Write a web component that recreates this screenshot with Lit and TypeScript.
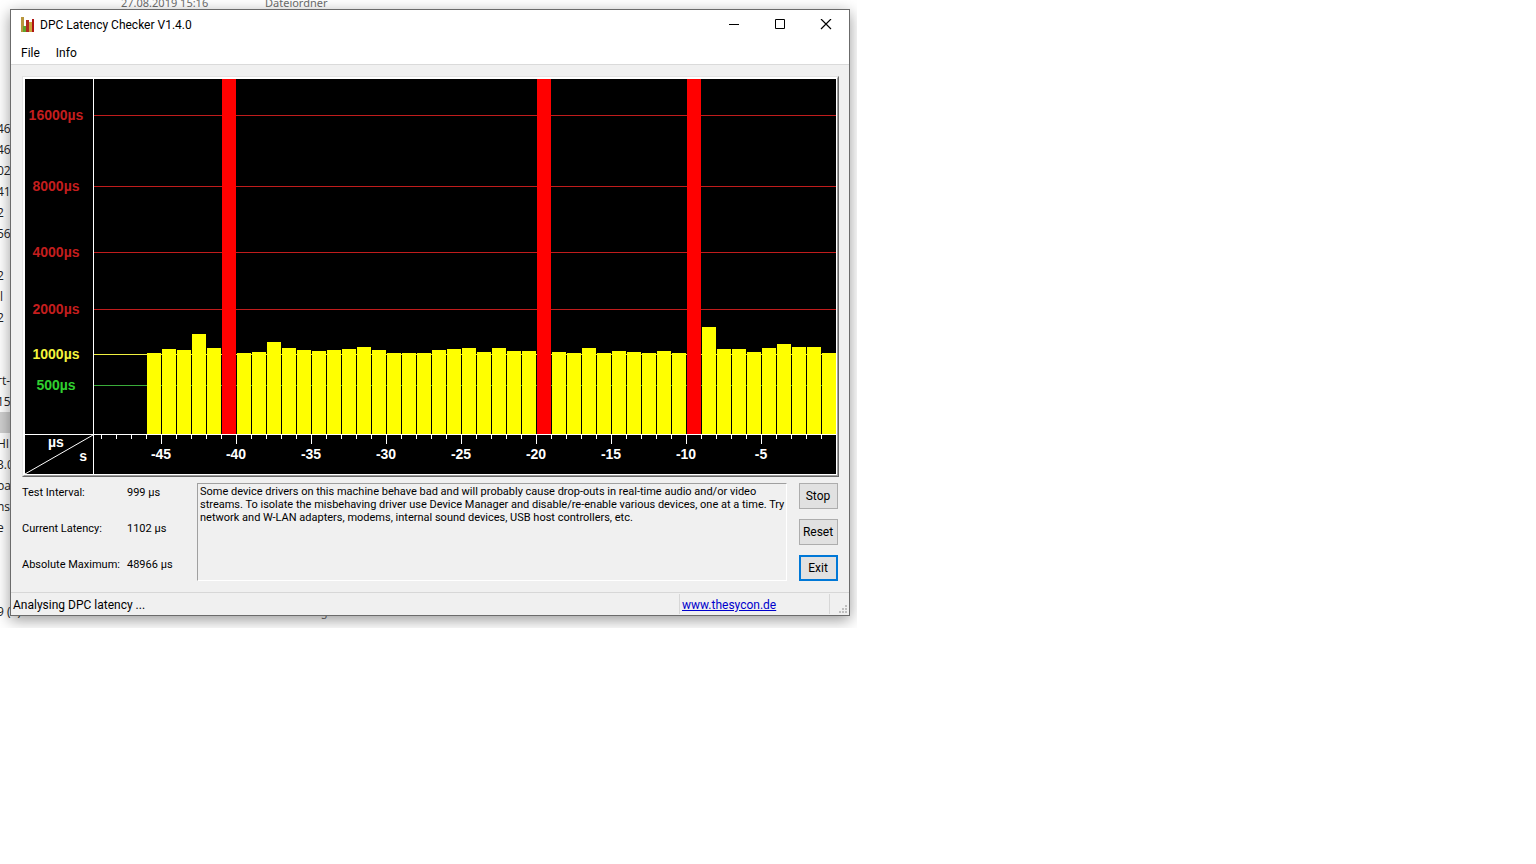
import { LitElement, html, css } from "lit";
import { customElement, property } from "lit/decorators.js";
import { classMap } from "lit/directives/class-map.js";
import { styleMap } from "lit/directives/style-map.js";

const PLOT_TOP = 79;
const PLOT_BASE = 434;
const FULL = PLOT_BASE - PLOT_TOP;

/* Bar heights in pixels above the time axis, oldest first. */
const BARS: number[] = [
  81, 85, 84, 100, 86, FULL, 81, 82, 92, 86, 84, 83, 84, 85, 87, 84, 81, 81, 81,
  84, 85, 86, 82, 86, 83, 83, FULL, 82, 81, 86, 81, 83, 82, 81, 83, 81, FULL,
  107, 85, 85, 82, 86, 90, 87, 87, 81,
];

const LEVELS = [
  { label: "16000µs", height: 319, tone: "high" },
  { label: "8000µs", height: 248, tone: "high" },
  { label: "4000µs", height: 182, tone: "high" },
  { label: "2000µs", height: 125, tone: "high" },
  { label: "1000µs", height: 80, tone: "mid" },
  { label: "500µs", height: 49, tone: "low" },
];

@customElement("latency-chart")
export class LatencyChart extends LitElement {
  @property({ attribute: false }) bars: number[] = BARS;

  static styles = css`
    :host {
      display: block;
      border: 1px solid #e3e3e3;
      border-right-color: #696969;
      border-bottom-color: #696969;
    }
    .bevel {
      border: 1px solid #fff;
      border-right-color: #a0a0a0;
      border-bottom-color: #a0a0a0;
    }
    .face {
      display: grid;
      grid-template-columns: 68px minmax(0, 1fr);
      grid-template-rows: 355px 40px;
      background: #000;
      border: 1px solid #fff;
      font: bold 14px/16px "Liberation Sans", Arial, sans-serif;
      color: #fff;
    }
    .scale {
      position: relative;
    }
    .level {
      position: absolute;
      left: 0;
      right: 6px;
      text-align: center;
      transform: translateY(50%);
    }
    .plot {
      position: relative;
      border-left: 1px solid #fff;
      overflow: hidden;
      display: flex;
      justify-content: flex-end;
      align-items: flex-end;
    }
    .line {
      position: absolute;
      left: 0;
      right: 0;
      height: 1px;
    }
    .level.high {
      color: #c41e1e;
    }
    .level.mid {
      color: #f4f43c;
    }
    .level.low {
      color: #30d030;
    }
    .line.high {
      background: #c01c1c;
    }
    .line.mid {
      background: #f0f040;
    }
    .line.low {
      background: #3aac3a;
    }
    .bar {
      position: relative;
      flex: none;
      width: 14px;
      margin-left: 1px;
      background: #ff0;
    }
    .bar.over {
      background: #f00;
    }
    .corner {
      position: relative;
      border-top: 1px solid #fff;
      display: grid;
      grid-template-rows: 14px 16px;
      padding: 0 6px 0 23px;
      line-height: 14px;
    }
    .corner svg {
      position: absolute;
      inset: 0;
      width: 100%;
      height: 100%;
    }
    .seconds {
      justify-self: end;
    }
    .axis {
      border-left: 1px solid #fff;
      border-top: 1px solid #fff;
      overflow: hidden;
      display: flex;
      justify-content: flex-end;
    }
    .slot {
      flex: none;
      width: 15px;
      display: flex;
      flex-direction: column;
      align-items: flex-start;
    }
    .tick {
      width: 1px;
      height: 4px;
      background: #fff;
    }
    .major .tick {
      height: 9px;
    }
    .time {
      width: 40px;
      margin-left: -20px;
      margin-top: 2px;
      text-align: center;
    }
  `;

  render() {
    const slots = Array.from({ length: 49 }, (_, i) => i - 49);
    return html`
      <div class="bevel">
        <div class="face">
          <div class="scale">
            ${LEVELS.map(
              (l) => html`<span class="level ${l.tone}" style=${styleMap({ bottom: `${l.height}px` })}>${l.label}</span>`
            )}
          </div>
          <div class="plot">
            ${LEVELS.map(
              (l) => html`<span class="line ${l.tone}" style=${styleMap({ bottom: `${l.height - 1}px` })}></span>`
            )}
            ${this.bars.map(
              (h) => html`<span
                class=${classMap({ bar: true, over: h >= FULL })}
                style=${styleMap({ height: `${h}px` })}
              ></span>`
            )}
          </div>
          <div class="corner">
            <svg viewBox="0 0 68 39" preserveAspectRatio="none" aria-hidden="true">
              <path d="M0 39 68 0" stroke="#fff" fill="none" />
            </svg>
            <span>µs</span>
            <span class="seconds">s</span>
          </div>
          <div class="axis">
            ${slots.map((s) => {
              const major = s % 5 === 0;
              return html`<div class=${classMap({ slot: true, major })}>
                <span class="tick"></span>
                ${major ? html`<span class="time">${s}</span>` : ""}
              </div>`;
            })}
          </div>
        </div>
      </div>
    `;
  }
}

interface FileRow {
  name?: string;
  date?: string;
  kind?: string;
  size?: string;
  selected?: boolean;
}

const FILES: FileRow[] = Array.from({ length: 30 }, () => ({}));
const NAMES: Record<number, string> = {
  6: "469", 7: "467", 8: "029", 9: "419", 10: "2", 11: "566", 13: "2", 14: "ll",
  15: "2", 18: "rt-", 19: "153", 21: "HI", 22: "3.0", 23: "bat", 24: "nst", 25: "e",
};
for (const [row, name] of Object.entries(NAMES)) FILES[Number(row)].name = name;
FILES[0] = { date: "27.08.2019 15:16", kind: "Dateiordner" };
FILES[20].selected = true;
FILES[29] = { name: "9 (1).exe", date: "03.02.2020 15:29", kind: "Anwendung", size: "46.604 KB" };

@customElement("file-list")
export class FileList extends LitElement {
  static styles = css`
    :host {
      display: block;
      overflow: hidden;
      background: #fff;
      font: 12px/21px "Open Sans", "Noto Sans", sans-serif;
      color: #222;
    }
    .rows {
      margin: -8px 0 0 -3px;
    }
    .row {
      display: grid;
      grid-template-columns: 124px 144px 137px 1fr;
      height: 21px;
      white-space: nowrap;
    }
    .selected .name {
      background: #d0d0d0;
    }
    .meta {
      color: #6d6d6d;
      font: 11px/21px "Noto Sans", sans-serif;
    }
  `;

  render() {
    return html`<div class="rows">
      ${FILES.map(
        (f) => html`<div class=${classMap({ row: true, selected: !!f.selected })}>
          <span class="name">${f.name ?? ""}</span>
          <span class="meta">${f.date ?? ""}</span>
          <span class="meta">${f.kind ?? ""}</span>
          <span class="meta">${f.size ?? ""}</span>
        </div>`
      )}
    </div>`;
  }
}

@customElement("app-root")
export class AppRoot extends LitElement {
  static styles = css`
    :host {
      display: block;
      min-height: 100vh;
      background: #fff;
      color: #000;
      font: 11px/13px "Roboto", "DejaVu Sans", sans-serif;
    }
    .desktop {
      position: relative;
      box-sizing: border-box;
      width: 857px;
      max-width: 100%;
      padding: 9px 7px 12px 10px;
      overflow: hidden;
    }
    file-list {
      position: absolute;
      inset: 0;
    }
    .window {
      position: relative;
      background: #f0f0f0;
      border: 1px solid #6b6b6b;
      box-shadow: 0 4px 14px rgba(0, 0, 0, 0.4);
    }
    .titlebar {
      display: flex;
      align-items: center;
      height: 30px;
      padding-left: 9px;
      background: #fff;
      font: 12px/16px "Roboto", "Noto Sans", sans-serif;
    }
    .titlebar h1 {
      flex: 1;
      margin: 0 0 0 5px;
      font: inherit;
    }
    .logo {
      width: 15px;
      height: 16px;
    }
    .caption {
      display: grid;
      place-items: center;
      width: 46px;
      height: 28px;
      padding: 0;
      border: 0;
      background: none;
    }
    .caption svg {
      width: 12px;
      height: 12px;
      stroke: #000;
      fill: none;
    }
    .menubar {
      display: flex;
      height: 22px;
      padding: 2px 2px 0;
      background: #fff;
      border-bottom: 1px solid #dadada;
    }
    .menubar button {
      padding: 0 8px;
      border: 0;
      background: none;
      color: #000;
      font: 12px/22px "Roboto", "Noto Sans", sans-serif;
    }
    latency-chart {
      margin: 11px 10px 0 11px;
    }
    .panel {
      display: grid;
      grid-template-columns: 175px minmax(0, 1fr) 39px;
      padding: 6px 11px 11px 11px;
    }
    .stats {
      display: grid;
      grid-template-columns: 105px 1fr;
      grid-template-rows: 36px 36px;
      align-content: start;
      margin: 0;
      padding-top: 3px;
    }
    .stats dt,
    .stats dd {
      margin: 0;
    }
    .message {
      box-sizing: border-box;
      height: 98px;
      margin: 0 12px 0 0;
      padding: 1px 0 1px 2px;
      border: 1px solid #a0a0a0;
      border-right-color: #fff;
      border-bottom-color: #fff;
    }
    .actions {
      display: grid;
      grid-auto-rows: 26px;
      gap: 10px;
      align-content: start;
      height: 98px;
    }
    .actions button {
      padding: 0 1px 0 0;
      border: 1px solid #adadad;
      border-radius: 0;
      background: #e1e1e1;
      color: #000;
      font: 12px/16px "Roboto", "DejaVu Sans", sans-serif;
    }
    .actions .default {
      border: 2px solid #0078d7;
    }
    .statusbar {
      display: grid;
      grid-template-columns: minmax(0, 1fr) 150px 19px;
      height: 22px;
      border-top: 1px solid #d7d7d7;
      font: 12px/22px "Roboto", "DejaVu Sans", sans-serif;
    }
    .statusbar > * {
      padding: 0 2px;
      height: 20px;
      margin-top: 1px;
      border-right: 1px solid #d7d7d7;
    }
    .statusbar .grip {
      display: flex;
      align-items: flex-end;
      justify-content: flex-end;
      border: 0;
      padding: 0 1px 0 0;
    }
    .grip svg {
      width: 9px;
      height: 9px;
      fill: #bfbfbf;
    }
    a {
      color: #00c;
    }
  `;

  render() {
    return html`
      <div class="desktop">
        <file-list aria-hidden="true"></file-list>
        <main class="window">
          <header class="titlebar">
            <svg class="logo" viewBox="0 0 15 16" aria-hidden="true">
              <path fill="#b8963c" d="M1 0h3v15H1z" />
              <path fill="#5fa32c" d="M3 9h4v6H3z" />
              <path fill="#b02a20" d="M6 3h3v12H6z" />
              <path fill="#c9a63c" d="M9 5h3v10H9z" />
              <path fill="#b01414" d="M12 2h2v13h-2z" />
            </svg>
            <h1>DPC Latency Checker V1.4.0</h1>
            <button class="caption" aria-label="Minimize">
              <svg viewBox="0 0 12 12"><path d="M1 5.5h10" /></svg>
            </button>
            <button class="caption" aria-label="Maximize">
              <svg viewBox="0 0 12 12"><path d="M1.5.5h9v9h-9z" /></svg>
            </button>
            <button class="caption" aria-label="Close">
              <svg viewBox="0 0 12 12"><path d="m1 0 10 10m0-10L1 10" stroke-width="1.2" /></svg>
            </button>
          </header>
          <nav class="menubar">
            <button>File</button>
            <button>Info</button>
          </nav>
          <latency-chart></latency-chart>
          <section class="panel">
            <dl class="stats">
              <dt>Test Interval:</dt>
              <dd>999 µs</dd>
              <dt>Current Latency:</dt>
              <dd>1102 µs</dd>
              <dt>Absolute Maximum:</dt>
              <dd>48966 µs</dd>
            </dl>
            <p class="message">
              Some device drivers on this machine behave bad and will probably cause drop-outs in real-time audio and/or
              video streams. To isolate the misbehaving driver use Device Manager and disable/re-enable various devices,
              one at a time. Try network and W-LAN adapters, modems, internal sound devices, USB host controllers, etc.
            </p>
            <div class="actions">
              <button>Stop</button>
              <button>Reset</button>
              <button class="default">Exit</button>
            </div>
          </section>
          <footer class="statusbar">
            <span>Analysing DPC latency ...</span>
            <span><a href="http://www.thesycon.de">www.thesycon.de</a></span>
            <span class="grip">
              <svg viewBox="0 0 9 9" aria-hidden="true">
                <path d="M6 0h2v2H6zM3 3h2v2H3zM6 3h2v2H6zM0 6h2v2H0zM3 6h2v2H3zM6 6h2v2H6z" />
              </svg>
            </span>
          </footer>
        </main>
      </div>
    `;
  }
}
